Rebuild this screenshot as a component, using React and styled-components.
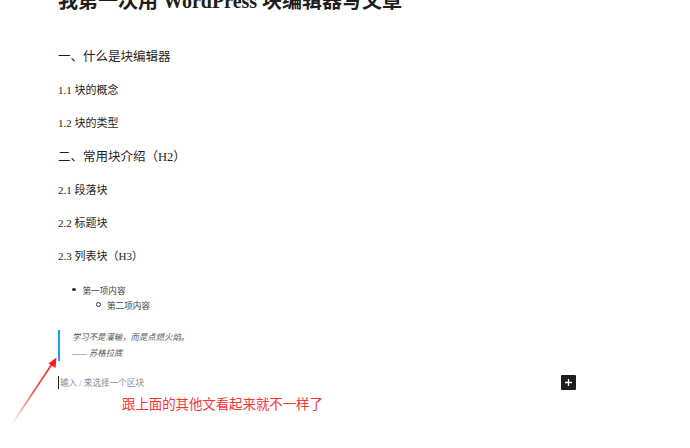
import React from "react";
import styled, { createGlobalStyle } from "styled-components";

const Global = createGlobalStyle`
  html, body {
    margin: 0;
    padding: 0;
    background: #fff;
    overflow: hidden;
  }
  body {
    font-family: "Liberation Serif", "Noto Sans CJK SC", serif;
    color: #1e1e1e;
  }
`;

const Page = styled.div`
  position: relative;
  width: 690px;
  height: 448px;
  overflow: hidden;
`;

const Editor = styled.div`
  padding-left: 58px;
  width: 518px;
`;

const Title = styled.h1`
  margin: -11px 0 0;
  font-size: 20px;
  line-height: 24px;
  font-weight: 700;
  white-space: nowrap;
`;

const Heading = styled.div`
  height: 33px;
  line-height: 33px;
  font-size: ${(p) => (p.$level === 2 ? "12.5px" : "11px")};
  margin-top: ${(p) => p.$top || 0}px;
  white-space: nowrap;
`;

const List = styled.ul`
  list-style: none;
  margin: 9px 0 0;
  padding: 0;
`;

const Item = styled.li`
  display: flex;
  align-items: center;
  height: 15px;
  font-size: 8.6px;
  color: #444;
  padding-left: ${(p) => p.$indent}px;
`;

const Bullet = styled.span`
  width: ${(p) => (p.$hollow ? 3 : 3.5)}px;
  height: ${(p) => (p.$hollow ? 3 : 3.5)}px;
  border-radius: 50%;
  box-sizing: content-box;
  background: ${(p) => (p.$hollow ? "transparent" : "#333")};
  border: ${(p) => (p.$hollow ? "1px solid #333" : "none")};
  margin-right: ${(p) => (p.$hollow ? 6 : 7)}px;
`;

const Quote = styled.blockquote`
  margin: 18px 0 0;
  padding: 0 0 0 12px;
  border-left: 2.5px solid #1ea0e6;
  height: 31px;
  font-style: italic;
  font-size: 8.4px;
  line-height: 16px;
  color: #555;
`;

const QuoteLine = styled.div`
  height: 16px;
  white-space: nowrap;
`;

const InputRow = styled.div`
  display: flex;
  align-items: center;
  justify-content: space-between;
  margin-top: 13px;
  height: 16px;
`;

const Placeholder = styled.div`
  display: flex;
  align-items: center;
  font-size: 8.6px;
  color: #8a8a8a;
`;

const Caret = styled.span`
  width: 1px;
  height: 13px;
  background: #1e1e1e;
  margin-right: 1px;
`;

const PlusButton = styled.button`
  width: 15px;
  height: 15px;
  padding: 0;
  border: none;
  border-radius: 1px;
  background: #1e1e1e;
  display: flex;
  align-items: center;
  justify-content: center;
`;

const Note = styled.div`
  margin: 4px 0 0 64px;
  font-family: "Noto Sans CJK SC", "Liberation Sans", sans-serif;
  font-size: 13.4px;
  line-height: 18px;
  color: #ff3333;
  white-space: nowrap;
`;

const Arrow = styled.svg`
  position: absolute;
  left: 0;
  top: 0;
  pointer-events: none;
`;

export default function App() {
  return (
    <Page>
      <Global />
      <Editor>
        <Title>我第一次用 WordPress 块编辑器写文章</Title>
        <Heading $level={2} $top={28}>一、什么是块编辑器</Heading>
        <Heading $level={3}>1.1 块的概念</Heading>
        <Heading $level={3}>1.2 块的类型</Heading>
        <Heading $level={2} $top={1}>二、常用块介绍（H2）</Heading>
        <Heading $level={3}>2.1 段落块</Heading>
        <Heading $level={3}>2.2 标题块</Heading>
        <Heading $level={3}>2.3 列表块（H3）</Heading>
        <List>
          <Item $indent={14}>
            <Bullet />
            第一项内容
          </Item>
          <Item $indent={38}>
            <Bullet $hollow />
            第二项内容
          </Item>
        </List>
        <Quote>
          <QuoteLine>学习不是灌输，而是点燃火焰。</QuoteLine>
          <QuoteLine>—— 苏格拉底</QuoteLine>
        </Quote>
        <InputRow>
          <Placeholder>
            <Caret />
            输入 / 来选择一个区块
          </Placeholder>
          <PlusButton aria-label="添加区块">
            <svg width="9" height="9" viewBox="0 0 9 9">
              <path d="M4.5 1v7M1 4.5h7" stroke="#fff" strokeWidth="1.3" />
            </svg>
          </PlusButton>
        </InputRow>
        <Note>跟上面的其他文看起来就不一样了</Note>
      </Editor>
      <Arrow width="690" height="448" viewBox="0 0 690 448">
        <defs>
          <linearGradient id="fade" x1="12" y1="424" x2="56" y2="358" gradientUnits="userSpaceOnUse">
            <stop offset="0" stopColor="#ff2020" stopOpacity="0" />
            <stop offset="0.5" stopColor="#ff2020" stopOpacity="0.8" />
            <stop offset="1" stopColor="#ff1a1a" stopOpacity="1" />
          </linearGradient>
        </defs>
        <path d="M12 424 L52 364" stroke="url(#fade)" strokeWidth="1.6" fill="none" />
        <path d="M56.5 357.5 L55.5 368 L48.5 363.5 Z" fill="#ff1a1a" />
      </Arrow>
    </Page>
  );
}
